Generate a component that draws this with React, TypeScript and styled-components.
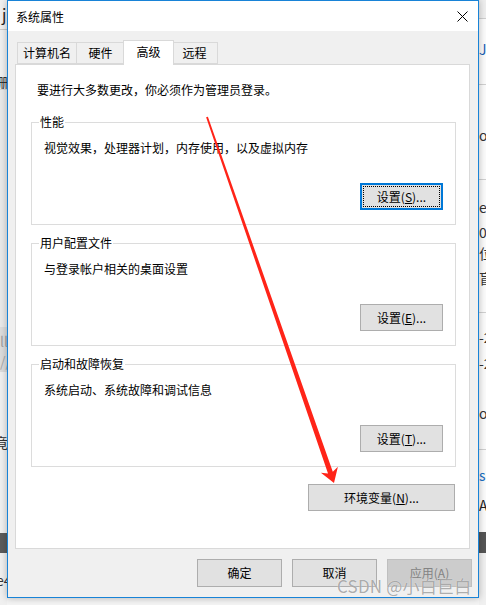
import React from "react";
import styled, { createGlobalStyle } from "styled-components";

const GlobalStyle = createGlobalStyle`
  html, body {
    margin: 0;
    padding: 0;
  }
  body {
    width: 486px;
    height: 605px;
    overflow: hidden;
    background: #f3f3f3;
    font-family: "Noto Sans CJK SC", "Noto Sans", sans-serif;
    font-size: 12px;
    color: #000;
  }
`;

type Glyph = { y: number; t: string; c?: string; shift?: number; size?: number };
type Seg = { h: number; bg: string; line?: string; glyphs?: Glyph[] };

const leftSegs: Seg[] = [
  { h: 30, bg: "#f0f0f0", line: "#c9c9c9", glyphs: [{ y: 14, t: "j", c: "#1e1e1e", shift: 2, size: 16 }] },
  { h: 60, bg: "#f0f0f0", line: "#d4d4d4", glyphs: [{ y: 52, t: "珊", c: "#333", shift: -6 }] },
  { h: 237, bg: "#e9e9e9" },
  { h: 45, bg: "#dcdcdc", glyphs: [{ y: 14, t: "lli", c: "#a0a0a0" }, { y: 34, t: "//", c: "#a8a8a8" }] },
  { h: 161, bg: "#f0f0f0", glyphs: [{ y: 70, t: "竟", c: "#333", shift: -6 }] },
  { h: 20, bg: "#5b5b5b" },
  { h: 52, bg: "#f0f0f0", glyphs: [{ y: 27, t: "e4", c: "#333", shift: -4 }] },
];

const rightSegs: Seg[] = [
  { h: 19, bg: "#eeeeee", line: "#cfcfcf" },
  { h: 66, bg: "#fbfbfb", line: "#d0d0d0", glyphs: [{ y: 30, t: "J", c: "#1a5fb4" }] },
  { h: 95, bg: "#fbfbfb", line: "#d0d0d0", glyphs: [{ y: 50, t: "or", c: "#333" }] },
  {
    h: 133,
    bg: "#fbfbfb",
    line: "#d0d0d0",
    glyphs: [
      { y: 27, t: "el", c: "#333" },
      { y: 52, t: "0", c: "#333" },
      { y: 73, t: "位", c: "#333" },
      { y: 98, t: "盲", c: "#333" },
    ],
  },
  {
    h: 137,
    bg: "#fbfbfb",
    line: "#d0d0d0",
    glyphs: [
      { y: 24, t: "-2", c: "#333" },
      { y: 50, t: "-2", c: "#333" },
      { y: 100, t: "or", c: "#333" },
    ],
  },
  {
    h: 82,
    bg: "#fbfbfb",
    glyphs: [
      { y: 25, t: "sc", c: "#1a6fc4" },
      { y: 55, t: "A", c: "#222" },
    ],
  },
  { h: 21, bg: "#555555" },
  { h: 52, bg: "#f0f0f0" },
];

const Desktop = styled.div`
  position: relative;
  display: grid;
  grid-template-columns: 7px 472px 7px;
  grid-template-rows: 598px 7px;
  width: 486px;
  height: 605px;
  overflow: hidden;
`;

const Strip = styled.div<{ $col: number }>`
  grid-column: ${(p) => p.$col};
  grid-row: 1 / span 2;
  display: flex;
  flex-direction: column;
  overflow: hidden;
`;

const Segment = styled.div<{ $h: number; $bg: string; $line?: string }>`
  flex: none;
  box-sizing: border-box;
  height: ${(p) => p.$h}px;
  background: ${(p) => p.$bg};
  border-bottom: ${(p) => (p.$line ? `1px solid ${p.$line}` : "none")};
  display: flex;
  flex-direction: column;
  overflow: hidden;
`;

const GlyphText = styled.span<{ $mt: number; $c: string; $shift: number; $size: number }>`
  display: block;
  flex: none;
  height: 14px;
  line-height: 14px;
  margin-top: ${(p) => p.$mt}px;
  margin-left: ${(p) => p.$shift}px;
  font-size: ${(p) => p.$size}px;
  color: ${(p) => p.$c};
  white-space: nowrap;
`;

const BottomStrip = styled.div`
  grid-column: 2;
  grid-row: 2;
  background: #f4f4f4;
`;

const Dialog = styled.div`
  grid-column: 2;
  grid-row: 1;
  position: relative;
  z-index: 1;
  box-sizing: border-box;
  border: 1px solid #1883d7;
  background: #f0f0f0;
  display: flex;
  flex-direction: column;
  box-shadow: 0 0 7px rgba(0, 0, 0, 0.28);
`;

const TitleBar = styled.div`
  height: 30px;
  background: #fff;
  display: flex;
  align-items: center;
  padding-left: 8px;
`;

const Title = styled.span`
  font-size: 12px;
  line-height: 16px;
  margin-top: 1px;
`;

const CloseButton = styled.div`
  margin-left: auto;
  width: 30px;
  height: 30px;
  margin-right: 1px;
  display: flex;
  align-items: center;
  justify-content: center;
`;

const Body = styled.div`
  flex: 1;
  display: flex;
  flex-direction: column;
  padding: 0 8px 0 7px;
`;

const TabStrip = styled.div`
  margin-top: 9px;
  height: 24px;
  display: flex;
  align-items: flex-end;
  padding-left: 2px;
  position: relative;
  z-index: 2;
`;

const Tab = styled.div<{ $w: number; $active?: boolean }>`
  box-sizing: border-box;
  width: ${(p) => (p.$active ? p.$w + 4 : p.$w)}px;
  height: ${(p) => (p.$active ? 25 : 22)}px;
  margin: ${(p) => (p.$active ? "0 -2px -1px -2px" : "0")};
  border: 1px solid #d9d9d9;
  border-bottom: ${(p) => (p.$active ? "none" : "1px solid #d9d9d9")};
  border-left: ${(p) => (p.$active ? "1px solid #d9d9d9" : "none")};
  background: ${(p) => (p.$active ? "#fff" : "#f0f0f0")};
  position: relative;
  z-index: ${(p) => (p.$active ? 1 : 0)};
  display: flex;
  align-items: center;
  justify-content: center;
  padding-bottom: ${(p) => (p.$active ? 2 : 0)}px;
  line-height: 16px;
  &:first-child {
    border-left: 1px solid #d9d9d9;
  }
`;

const Panel = styled.div`
  box-sizing: border-box;
  height: 485px;
  border: 1px solid #d9d9d9;
  background: #fff;
  display: flex;
  flex-direction: column;
  padding: 17px 13px 0 15px;
`;

const Intro = styled.p`
  margin: 0 0 0 6px;
  line-height: 16px;
`;

const GroupBox = styled.div<{ $mt: number }>`
  box-sizing: border-box;
  height: 103px;
  margin-top: ${(p) => p.$mt}px;
  border: 1px solid #dcdcdc;
  display: flex;
  flex-direction: column;
  padding: 0 12px 14px 12px;
`;

const Legend = styled.span`
  align-self: flex-start;
  margin: -9px 0 0 -5px;
  padding: 0 1px;
  background: #fff;
  line-height: 16px;
`;

const Description = styled.p`
  margin: 10px 0 0 0;
  line-height: 16px;
`;

const Button = styled.div<{ $w: number; $h?: number; $focused?: boolean; $disabled?: boolean }>`
  box-sizing: border-box;
  flex: none;
  width: ${(p) => p.$w}px;
  height: ${(p) => p.$h ?? 27}px;
  display: flex;
  align-items: center;
  justify-content: center;
  line-height: 16px;
  background: ${(p) => (p.$disabled ? "#cccccc" : "#e1e1e1")};
  color: ${(p) => (p.$disabled ? "#838383" : "#000")};
  border: ${(p) =>
    p.$focused ? "2px solid #0078d7" : p.$disabled ? "1px solid #bfbfbf" : "1px solid #adadad"};
  outline: ${(p) => (p.$focused ? "1px dotted #000" : "none")};
  outline-offset: -4px;
  u {
    text-decoration: underline;
    text-underline-offset: 1px;
  }
`;

const GroupButton = styled(Button)`
  margin-top: auto;
  align-self: flex-end;
`;

const EnvButton = styled(Button)`
  margin: 17px 1px 0 0;
  align-self: flex-end;
`;

const ButtonRow = styled.div`
  display: flex;
  justify-content: flex-end;
  gap: 10px;
  margin: 10px -2px 0 0;
`;

const Watermark = styled.div`
  position: absolute;
  left: 337px;
  top: 576px;
  z-index: 5;
  font-family: "Noto Sans CJK SC", "Liberation Sans", sans-serif;
  font-size: 17px;
  line-height: 20px;
  color: rgba(120, 120, 120, 0.62);
  text-shadow: 0 0 1px rgba(255, 255, 255, 0.9);
  white-space: nowrap;
  letter-spacing: 0.2px;
`;

const ArrowLayer = styled.svg`
  position: absolute;
  left: 0;
  top: 0;
  z-index: 6;
  pointer-events: none;
`;

function renderStrip(segs: Seg[]) {
  return segs.map((s, i) => {
    let cursor = 0;
    return (
      <Segment key={i} $h={s.h} $bg={s.bg} $line={s.line}>
        {(s.glyphs ?? []).map((g, j) => {
          const mt = g.y - 7 - cursor;
          cursor = g.y + 7;
          return (
            <GlyphText key={j} $mt={mt} $c={g.c ?? "#333"} $shift={g.shift ?? 0} $size={g.size ?? 14}>
              {g.t}
            </GlyphText>
          );
        })}
      </Segment>
    );
  });
}

const groups = [
  { legend: "性能", desc: "视觉效果，处理器计划，内存使用，以及虚拟内存", key: "S", focused: true, mt: 24 },
  { legend: "用户配置文件", desc: "与登录帐户相关的桌面设置", key: "E", focused: false, mt: 18 },
  { legend: "启动和故障恢复", desc: "系统启动、系统故障和调试信息", key: "T", focused: false, mt: 18 },
];

const tabs = [
  { label: "计算机名", w: 60 },
  { label: "硬件", w: 48 },
  { label: "高级", w: 47, active: true },
  { label: "远程", w: 46 },
];

export default function App() {
  return (
    <>
      <GlobalStyle />
      <Desktop>
        <Strip $col={1}>{renderStrip(leftSegs)}</Strip>
        <Dialog>
          <TitleBar>
            <Title>系统属性</Title>
            <CloseButton>
              <svg width="11" height="11" viewBox="0 0 11 11">
                <path d="M0.5 0.5 L10.5 10.5 M10.5 0.5 L0.5 10.5" stroke="#000" strokeWidth="1" fill="none" />
              </svg>
            </CloseButton>
          </TitleBar>
          <Body>
            <TabStrip>
              {tabs.map((t) => (
                <Tab key={t.label} $w={t.w} $active={t.active}>
                  {t.label}
                </Tab>
              ))}
            </TabStrip>
            <Panel>
              <Intro>要进行大多数更改，你必须作为管理员登录。</Intro>
              {groups.map((g) => (
                <GroupBox key={g.legend} $mt={g.mt}>
                  <Legend>{g.legend}</Legend>
                  <Description>{g.desc}</Description>
                  <GroupButton $w={83} $focused={g.focused}>
                    设置(<u>{g.key}</u>)...
                  </GroupButton>
                </GroupBox>
              ))}
              <EnvButton $w={147}>
                环境变量(<u>N</u>)...
              </EnvButton>
            </Panel>
            <ButtonRow>
              <Button $w={85} $h={28}>确定</Button>
              <Button $w={85} $h={28}>取消</Button>
              <Button $w={85} $h={28} $disabled>
                应用(<u>A</u>)
              </Button>
            </ButtonRow>
          </Body>
        </Dialog>
        <Strip $col={3}>{renderStrip(rightSegs)}</Strip>
        <BottomStrip />
        <Watermark>CSDN @小白巨白</Watermark>
        <ArrowLayer width="486" height="605" viewBox="0 0 486 605">
          <polygon
            points="207.9,116.7 332.8,471.8 337.9,466.8 334,483 320.9,472.8 328,473.4 206.1,117.3"
            fill="#ff2418"
          />
        </ArrowLayer>
      </Desktop>
    </>
  );
}
